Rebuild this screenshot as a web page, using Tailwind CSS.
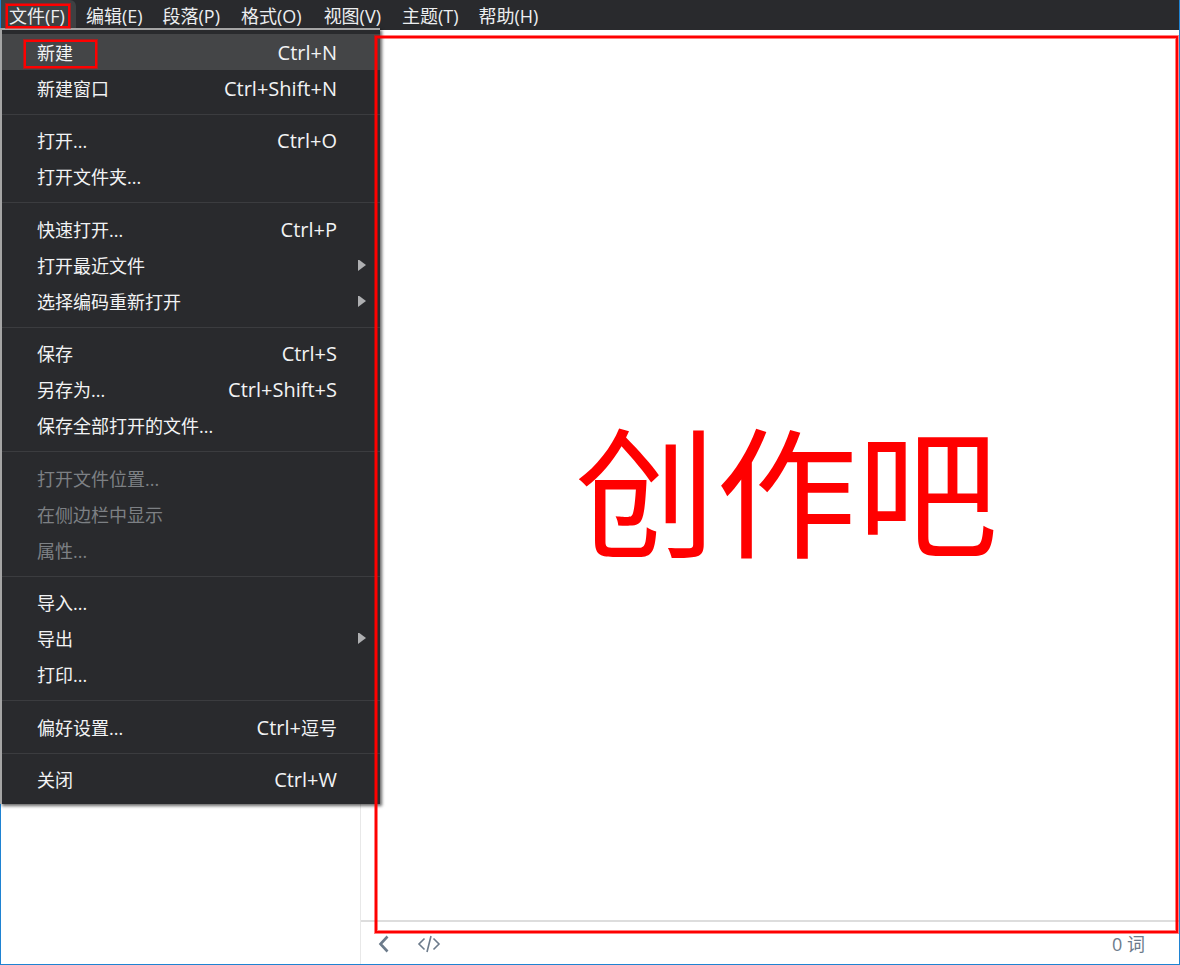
<!DOCTYPE html>
<html lang="zh-CN">

<head>
    <title>编辑器</title>
    <meta charset="UTF-8">
    <meta name="viewport" content="width=device-width, initial-scale=1.0">
    <script src="https://cdn.jsdelivr.net/npm/@tailwindcss/browser@4"></script>
</head>

<body class="bg-white font-['Open_Sans','Noto_Sans_CJK_SC',sans-serif] text-lg/6">

<div class="relative flex min-h-screen flex-col border-x border-b border-[#1f83d2]">
    <nav class="flex h-[30px] bg-[#292a2d] text-[#eceef0]">
        <button type="button" class="rounded-tr-md bg-[#3e4042] pt-0.5 pr-[11px] pl-2">文件(F)</button>
        <button type="button" class="px-2.5 pt-0.5">编辑(E)</button>
        <button type="button" class="px-2.5 pt-0.5">段落(P)</button>
        <button type="button" class="px-[11px] pt-0.5">格式(O)</button>
        <button type="button" class="px-[11px] pt-0.5">视图(V)</button>
        <button type="button" class="px-2.5 pt-0.5">主题(T)</button>
        <button type="button" class="px-2.5 pt-0.5">帮助(H)</button>
    </nav>

    <div class="flex flex-1">
        <aside class="w-[360px] border-r border-[#e8e8e8]"></aside>
        <div class="flex flex-1 flex-col">
            <main class="flex-1"></main>
            <footer class="flex h-11 items-center border-t-2 border-[#dddddd] pt-0.5 pr-[34px] pl-4 text-[#6c7b8b]">
                <button type="button" aria-label="侧边栏">
                    <svg class="h-5 w-3.5" viewBox="0 0 14 20" fill="none" stroke="currentColor" stroke-width="2.6">
                        <path d="M10.500 2.500L3.500 10L10.500 17.500"/>
                    </svg>
                </button>
                <button type="button" aria-label="源代码模式" class="ml-6.5">
                    <svg class="h-5 w-6" viewBox="0 0 24 20" fill="none" stroke="currentColor" stroke-width="1.6">
                        <path d="M7.500 4.500L2 10L7.500 15.500M16.500 4.500L22 10L16.500 15.500M14 2L10 18"/>
                    </svg>
                </button>
                <span class="ml-auto">0 词</span>
            </footer>
        </div>
    </div>

    <!-- 文件菜单 -->
    <div class="absolute top-[28px] -left-px w-[380px] border-t-2 border-l-2 border-[#a5a5a5] bg-[#292a2d] pt-1 pb-[7px] text-[#f2f3f4] shadow-[2px_2px_3px_#00000099]">
        <button type="button" class="flex h-9 w-full items-center justify-between bg-[#444547] pt-0.5 pr-[43px] pl-[35px]">新建<kbd class="font-[inherit] text-xl/6">Ctrl+N</kbd></button>
        <button type="button" class="flex h-9 w-full items-center justify-between pt-0.5 pr-[43px] pl-[35px]">新建窗口<kbd class="font-[inherit] text-xl/6">Ctrl+Shift+N</kbd></button>
        <hr class="mt-2 mb-[7px] border-[#3b3c3f]">
        <button type="button" class="flex h-9 w-full items-center justify-between pt-0.5 pr-[43px] pl-[35px]">打开...<kbd class="font-[inherit] text-xl/6">Ctrl+O</kbd></button>
        <button type="button" class="flex h-9 w-full items-center justify-between pt-0.5 pr-[43px] pl-[35px]">打开文件夹...</button>
        <hr class="my-2 border-[#3b3c3f]">
        <button type="button" class="flex h-9 w-full items-center justify-between pt-0.5 pr-[43px] pl-[35px]">快速打开...<kbd class="font-[inherit] text-xl/6">Ctrl+P</kbd></button>
        <button type="button" class="flex h-9 w-full items-center justify-between pt-0.5 pr-3.5 pl-[35px]">打开最近文件
            <svg class="h-3 w-2 fill-[#aeafb1]" viewBox="0 0 8 12"><path d="M0 -1L8 5L0 11Z"/></svg>
        </button>
        <button type="button" class="flex h-9 w-full items-center justify-between pt-0.5 pr-3.5 pl-[35px]">选择编码重新打开
            <svg class="h-3 w-2 fill-[#aeafb1]" viewBox="0 0 8 12"><path d="M0 -1L8 5L0 11Z"/></svg>
        </button>
        <hr class="mt-2 mb-[7px] border-[#3b3c3f]">
        <button type="button" class="flex h-9 w-full items-center justify-between pt-0.5 pr-[43px] pl-[35px]">保存<kbd class="font-[inherit] text-xl/6">Ctrl+S</kbd></button>
        <button type="button" class="flex h-9 w-full items-center justify-between pt-0.5 pr-[43px] pl-[35px]">另存为...<kbd class="font-[inherit] text-xl/6">Ctrl+Shift+S</kbd></button>
        <button type="button" class="flex h-9 w-full items-center justify-between pt-0.5 pr-[43px] pl-[35px]">保存全部打开的文件...</button>
        <hr class="my-2 border-[#3b3c3f]">
        <button type="button" disabled class="flex h-9 w-full items-center pt-0.5 pl-[35px] text-[#7d8084]">打开文件位置...</button>
        <button type="button" disabled class="flex h-9 w-full items-center pt-0.5 pl-[35px] text-[#7d8084]">在侧边栏中显示</button>
        <button type="button" disabled class="flex h-9 w-full items-center pt-0.5 pl-[35px] text-[#7d8084]">属性...</button>
        <hr class="mt-2 mb-[7px] border-[#3b3c3f]">
        <button type="button" class="flex h-9 w-full items-center justify-between pt-0.5 pr-[43px] pl-[35px]">导入...</button>
        <button type="button" class="flex h-9 w-full items-center justify-between pt-0.5 pr-3.5 pl-[35px]">导出
            <svg class="h-3 w-2 fill-[#aeafb1]" viewBox="0 0 8 12"><path d="M0 -1L8 5L0 11Z"/></svg>
        </button>
        <button type="button" class="flex h-9 w-full items-center justify-between pt-0.5 pr-[43px] pl-[35px]">打印...</button>
        <hr class="my-2 border-[#3b3c3f]">
        <button type="button" class="flex h-9 w-full items-center justify-between pt-0.5 pr-[43px] pl-[35px]">偏好设置...<kbd class="font-[inherit] text-xl/6">Ctrl+<span class="text-lg/6">逗号</span></kbd></button>
        <hr class="mt-2 mb-[7px] border-[#3b3c3f]">
        <button type="button" class="flex h-9 w-full items-center justify-between pt-0.5 pr-[43px] pl-[35px]">关闭<kbd class="font-[inherit] text-xl/6">Ctrl+W</kbd></button>
    </div>

    <!-- 红色标注框 -->
    <div class="pointer-events-none absolute top-1 left-[5px] h-6 w-16 border-2 border-[#ff0000] shadow-[0_0_0_1px_#ff000080]"></div>
    <div class="pointer-events-none absolute top-10 left-[23px] h-7 w-[73px] border-2 border-[#ff0000] shadow-[0_0_0_1px_#ff000080]"></div>
    <div class="pointer-events-none absolute top-9 right-px bottom-[31px] left-[374px] flex items-center justify-center border-2 border-[#ff0000] pt-4 pl-5 shadow-[0_0_0_1px_#ff000080,inset_0_0_0_1px_#ff000080]">
        <p class="text-[141px]/none text-[#ff0000]">创作吧</p>
    </div>
</div>

</body>
</html>
